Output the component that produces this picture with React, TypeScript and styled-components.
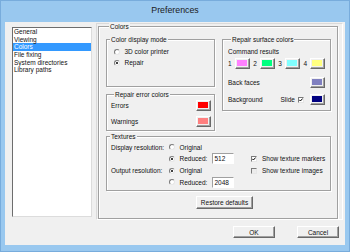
import React from "react";
import styled, { createGlobalStyle } from "styled-components";

const GlobalStyle = createGlobalStyle`
  html, body {
    margin: 0;
    padding: 0;
    background: #99c8ef;
  }
  body {
    font-family: "Liberation Sans", Arial, sans-serif;
    font-size: 6.5px;
    color: #111;
  }
  * {
    box-sizing: border-box;
  }
`;

const PAGES = [
  "General",
  "Viewing",
  "Colors",
  "File fixing",
  "System directories",
  "Library paths",
];

const COMMAND_COLORS = ["#ff80ff", "#00ff80", "#80ffff", "#ffff80"];

function Radio({ checked, label }: { checked?: boolean; label: string }) {
  return (
    <RadioLabel>
      <RadioDot $on={checked} />
      <span>{label}</span>
    </RadioLabel>
  );
}

function Check({ checked, label }: { checked?: boolean; label?: string }) {
  return (
    <CheckLabel>
      <CheckBox $on={checked}>
        {checked && (
          <svg width="4" height="4" viewBox="0 0 4 4">
            <polyline
              points="0.3,1.8 1.4,3 3.7,0.5"
              fill="none"
              stroke="#000"
              strokeWidth="1"
            />
          </svg>
        )}
      </CheckBox>
      {label && <span>{label}</span>}
    </CheckLabel>
  );
}

function App() {
  return (
    <>
      <GlobalStyle />
      <Window>
        <TitleBar>Preferences</TitleBar>
        <Client>
          <TopRow>
            <ListBox>
              {PAGES.map((p) => (
                <ListItem key={p} $selected={p === "Colors"}>
                  {p}
                </ListItem>
              ))}
            </ListBox>
            <Panel>
              <Group $w={240} $h={193} $pad="0 6px 0 7px">
                <Caption>Colors</Caption>
                <Columns>
                  <Column>
                    <Group $w={109} $h={48} $pad="0">
                      <Caption>Color display mode</Caption>
                      <RadioList>
                        <Radio label="3D color printer" />
                        <Radio checked label="Repair" />
                      </RadioList>
                    </Group>
                    <Group $w={109} $h={37} $pad="0 3px 0 4px" $mt={7}>
                      <Caption>Repair error colors</Caption>
                      <SwatchRow $mt={1}>
                        <span>Errors</span>
                        <Swatch $c="#ff0000" />
                      </SwatchRow>
                      <SwatchRow $mt={5}>
                        <span>Warnings</span>
                        <Swatch $c="#ff8080" />
                      </SwatchRow>
                    </Group>
                  </Column>
                  <Column>
                    <Group $w={109} $h={72} $pad="0 5px 0 5px">
                      <Caption>Repair surface colors</Caption>
                      <PlainLine>Command results</PlainLine>
                      <CommandRow>
                        {COMMAND_COLORS.map((c, i) => (
                          <NumberedSwatch key={c}>
                            <span>{i + 1}</span>
                            <Swatch $c={c} />
                          </NumberedSwatch>
                        ))}
                      </CommandRow>
                      <SwatchRow $mt={8}>
                        <span>Back faces</span>
                        <Swatch $c="#8080c0" />
                      </SwatchRow>
                      <SwatchRow $mt={6}>
                        <span>Background</span>
                        <SlideBox>
                          <span>Slide</span>
                          <Check checked />
                          <Swatch $c="#000080" />
                        </SlideBox>
                      </SwatchRow>
                    </Group>
                  </Column>
                </Columns>
                <Group $w={225} $h={55} $pad="0" $mt={5}>
                  <Caption>Textures</Caption>
                  <TextureGrid>
                    <span>Display resolution:</span>
                    <Radio label="Original" />
                    <span />
                    <span />

                    <span />
                    <Radio checked label="Reduced:" />
                    <NumberInput>512</NumberInput>
                    <OptionCell>
                      <Check checked label="Show texture markers" />
                    </OptionCell>

                    <span>Output resolution:</span>
                    <Radio checked label="Original" />
                    <span />
                    <OptionCell>
                      <Check label="Show texture images" />
                    </OptionCell>

                    <span />
                    <Radio label="Reduced:" />
                    <NumberInput>2048</NumberInput>
                    <span />
                  </TextureGrid>
                </Group>
                <RestoreRow>
                  <PushButton $w={57} $h={13}>
                    Restore defaults
                  </PushButton>
                </RestoreRow>
              </Group>
            </Panel>
          </TopRow>
          <BottomRow>
            <PushButton $w={42} $h={12}>
              OK
            </PushButton>
            <PushButton $w={42} $h={12}>
              Cancel
            </PushButton>
          </BottomRow>
        </Client>
      </Window>
    </>
  );
}

export default App;

const Window = styled.div`
  width: 350px;
  height: 252px;
  background: #99c8ef;
  border: 1px solid #78acdc;
  display: flex;
  flex-direction: column;
  padding: 0 4px 6px 4px;
`;

const TitleBar = styled.div`
  height: 21px;
  padding-bottom: 4px;
  display: flex;
  align-items: center;
  justify-content: center;
  font-size: 8.8px;
  color: #1b1b1b;
`;

const Client = styled.div`
  flex: 1;
  background: #f0f0f0;
  display: flex;
  flex-direction: column;
`;

const TopRow = styled.div`
  display: flex;
  align-items: flex-start;
`;

const ListBox = styled.div`
  width: 80px;
  height: 190px;
  margin: 5px 0 0 7px;
  background: #fff;
  border: 1px solid;
  border-color: #6d6d6d #dcdcdc #dcdcdc #6d6d6d;
`;

const ListItem = styled.div<{ $selected?: boolean }>`
  height: 7.7px;
  line-height: 7.7px;
  padding-left: 1px;
  white-space: nowrap;
  background: ${(p) => (p.$selected ? "#3399ff" : "transparent")};
  color: ${(p) => (p.$selected ? "#fff" : "#111")};
`;

const Panel = styled.div`
  width: 247px;
  height: 197px;
  margin: 1px 0 0 4px;
  padding: 2px 0 0 1px;
  border: 1px solid;
  border-color: #dadada #fff #fff #dadada;
`;

const Group = styled.div<{ $w: number; $h: number; $pad: string; $mt?: number }>`
  width: ${(p) => p.$w}px;
  height: ${(p) => p.$h}px;
  margin-top: ${(p) => p.$mt ?? 0}px;
  padding: ${(p) => p.$pad};
  border: 1px solid #a0a0a0;
  box-shadow: inset 1px 1px 0 #fff, 1px 1px 0 #fff;
  display: flex;
  flex-direction: column;
`;

const Caption = styled.div`
  align-self: flex-start;
  height: 8px;
  line-height: 8px;
  margin: -4px 0 0 3px;
  padding: 0 1px;
  background: #f0f0f0;
  white-space: nowrap;
`;

const Columns = styled.div`
  display: flex;
  gap: 7px;
  margin-top: 8px;
  align-items: flex-start;
`;

const Column = styled.div`
  display: flex;
  flex-direction: column;
`;

const RadioList = styled.div`
  display: flex;
  flex-direction: column;
  padding: 2px 0 0 7px;
`;

const RadioLabel = styled.label`
  height: 11px;
  display: flex;
  align-items: center;
  gap: 4.5px;
  white-space: nowrap;
`;

const RadioDot = styled.span<{ $on?: boolean }>`
  flex: none;
  width: 6px;
  height: 6px;
  border-radius: 50%;
  background: #fff;
  border: 1px solid;
  border-color: #7a7a7a #e6e6e6 #e6e6e6 #7a7a7a;
  display: inline-flex;
  align-items: center;
  justify-content: center;

  &::after {
    content: "";
    width: 2px;
    height: 2px;
    border-radius: 50%;
    background: ${(p) => (p.$on ? "#000" : "transparent")};
  }
`;

const CheckLabel = styled.label`
  display: flex;
  align-items: center;
  gap: 5px;
  white-space: nowrap;
`;

const CheckBox = styled.span<{ $on?: boolean }>`
  flex: none;
  width: 6px;
  height: 6px;
  background: ${(p) => (p.$on ? "#fff" : "#ececec")};
  border: 1px solid;
  border-color: #7a7a7a #e6e6e6 #e6e6e6 #7a7a7a;
  display: inline-flex;
  align-items: center;
  justify-content: center;
`;

const SwatchRow = styled.div<{ $mt: number }>`
  height: 11px;
  margin-top: ${(p) => p.$mt}px;
  display: flex;
  align-items: center;
  justify-content: space-between;
`;

const Swatch = styled.span<{ $c: string }>`
  flex: none;
  width: 15px;
  height: 11px;
  padding: 1px 2px 2px 1px;
  background: #f0f0f0;
  border: 1px solid;
  border-color: #fff #696969 #696969 #fff;
  box-shadow: inset -1px -1px 0 #a0a0a0;

  &::after {
    content: "";
    display: block;
    width: 100%;
    height: 100%;
    background: ${(p) => p.$c};
  }
`;

const PlainLine = styled.div`
  height: 10px;
  line-height: 10px;
  margin-top: 3px;
`;

const CommandRow = styled.div`
  height: 11px;
  margin-top: 1px;
  display: flex;
  align-items: center;
  justify-content: space-between;
`;

const NumberedSwatch = styled.div`
  display: flex;
  align-items: center;
  gap: 3px;
`;

const SlideBox = styled.div`
  display: flex;
  align-items: center;

  & > span:first-child {
    margin-right: 3px;
  }
  & > label {
    margin-right: 6px;
  }
`;

const TextureGrid = styled.div`
  display: grid;
  grid-template-columns: 58px 43px 22px 1fr;
  grid-auto-rows: 11.67px;
  align-items: center;
  padding: 0.5px 0 0 4px;
  white-space: nowrap;
`;

const NumberInput = styled.div`
  width: 22px;
  height: 11px;
  line-height: 9px;
  padding-left: 1.5px;
  background: #fff;
  border: 1px solid;
  border-color: #a0a0a0 #fff #fff #a0a0a0;
`;

const OptionCell = styled.div`
  margin-left: 17px;
`;

const RestoreRow = styled.div`
  display: flex;
  margin: 5px 0 0 90px;
`;

const PushButton = styled.button<{ $w: number; $h: number }>`
  width: ${(p) => p.$w}px;
  height: ${(p) => p.$h}px;
  padding: 0;
  font-family: inherit;
  font-size: 6.5px;
  color: #111;
  background: #f0f0f0;
  border: 1px solid;
  border-color: #fff #696969 #696969 #fff;
  box-shadow: inset -1px -1px 0 #a0a0a0;
  display: flex;
  align-items: center;
  justify-content: center;
`;

const BottomRow = styled.div`
  display: flex;
  justify-content: flex-end;
  gap: 22px;
  margin-top: 6px;
  padding-right: 6px;
`;
